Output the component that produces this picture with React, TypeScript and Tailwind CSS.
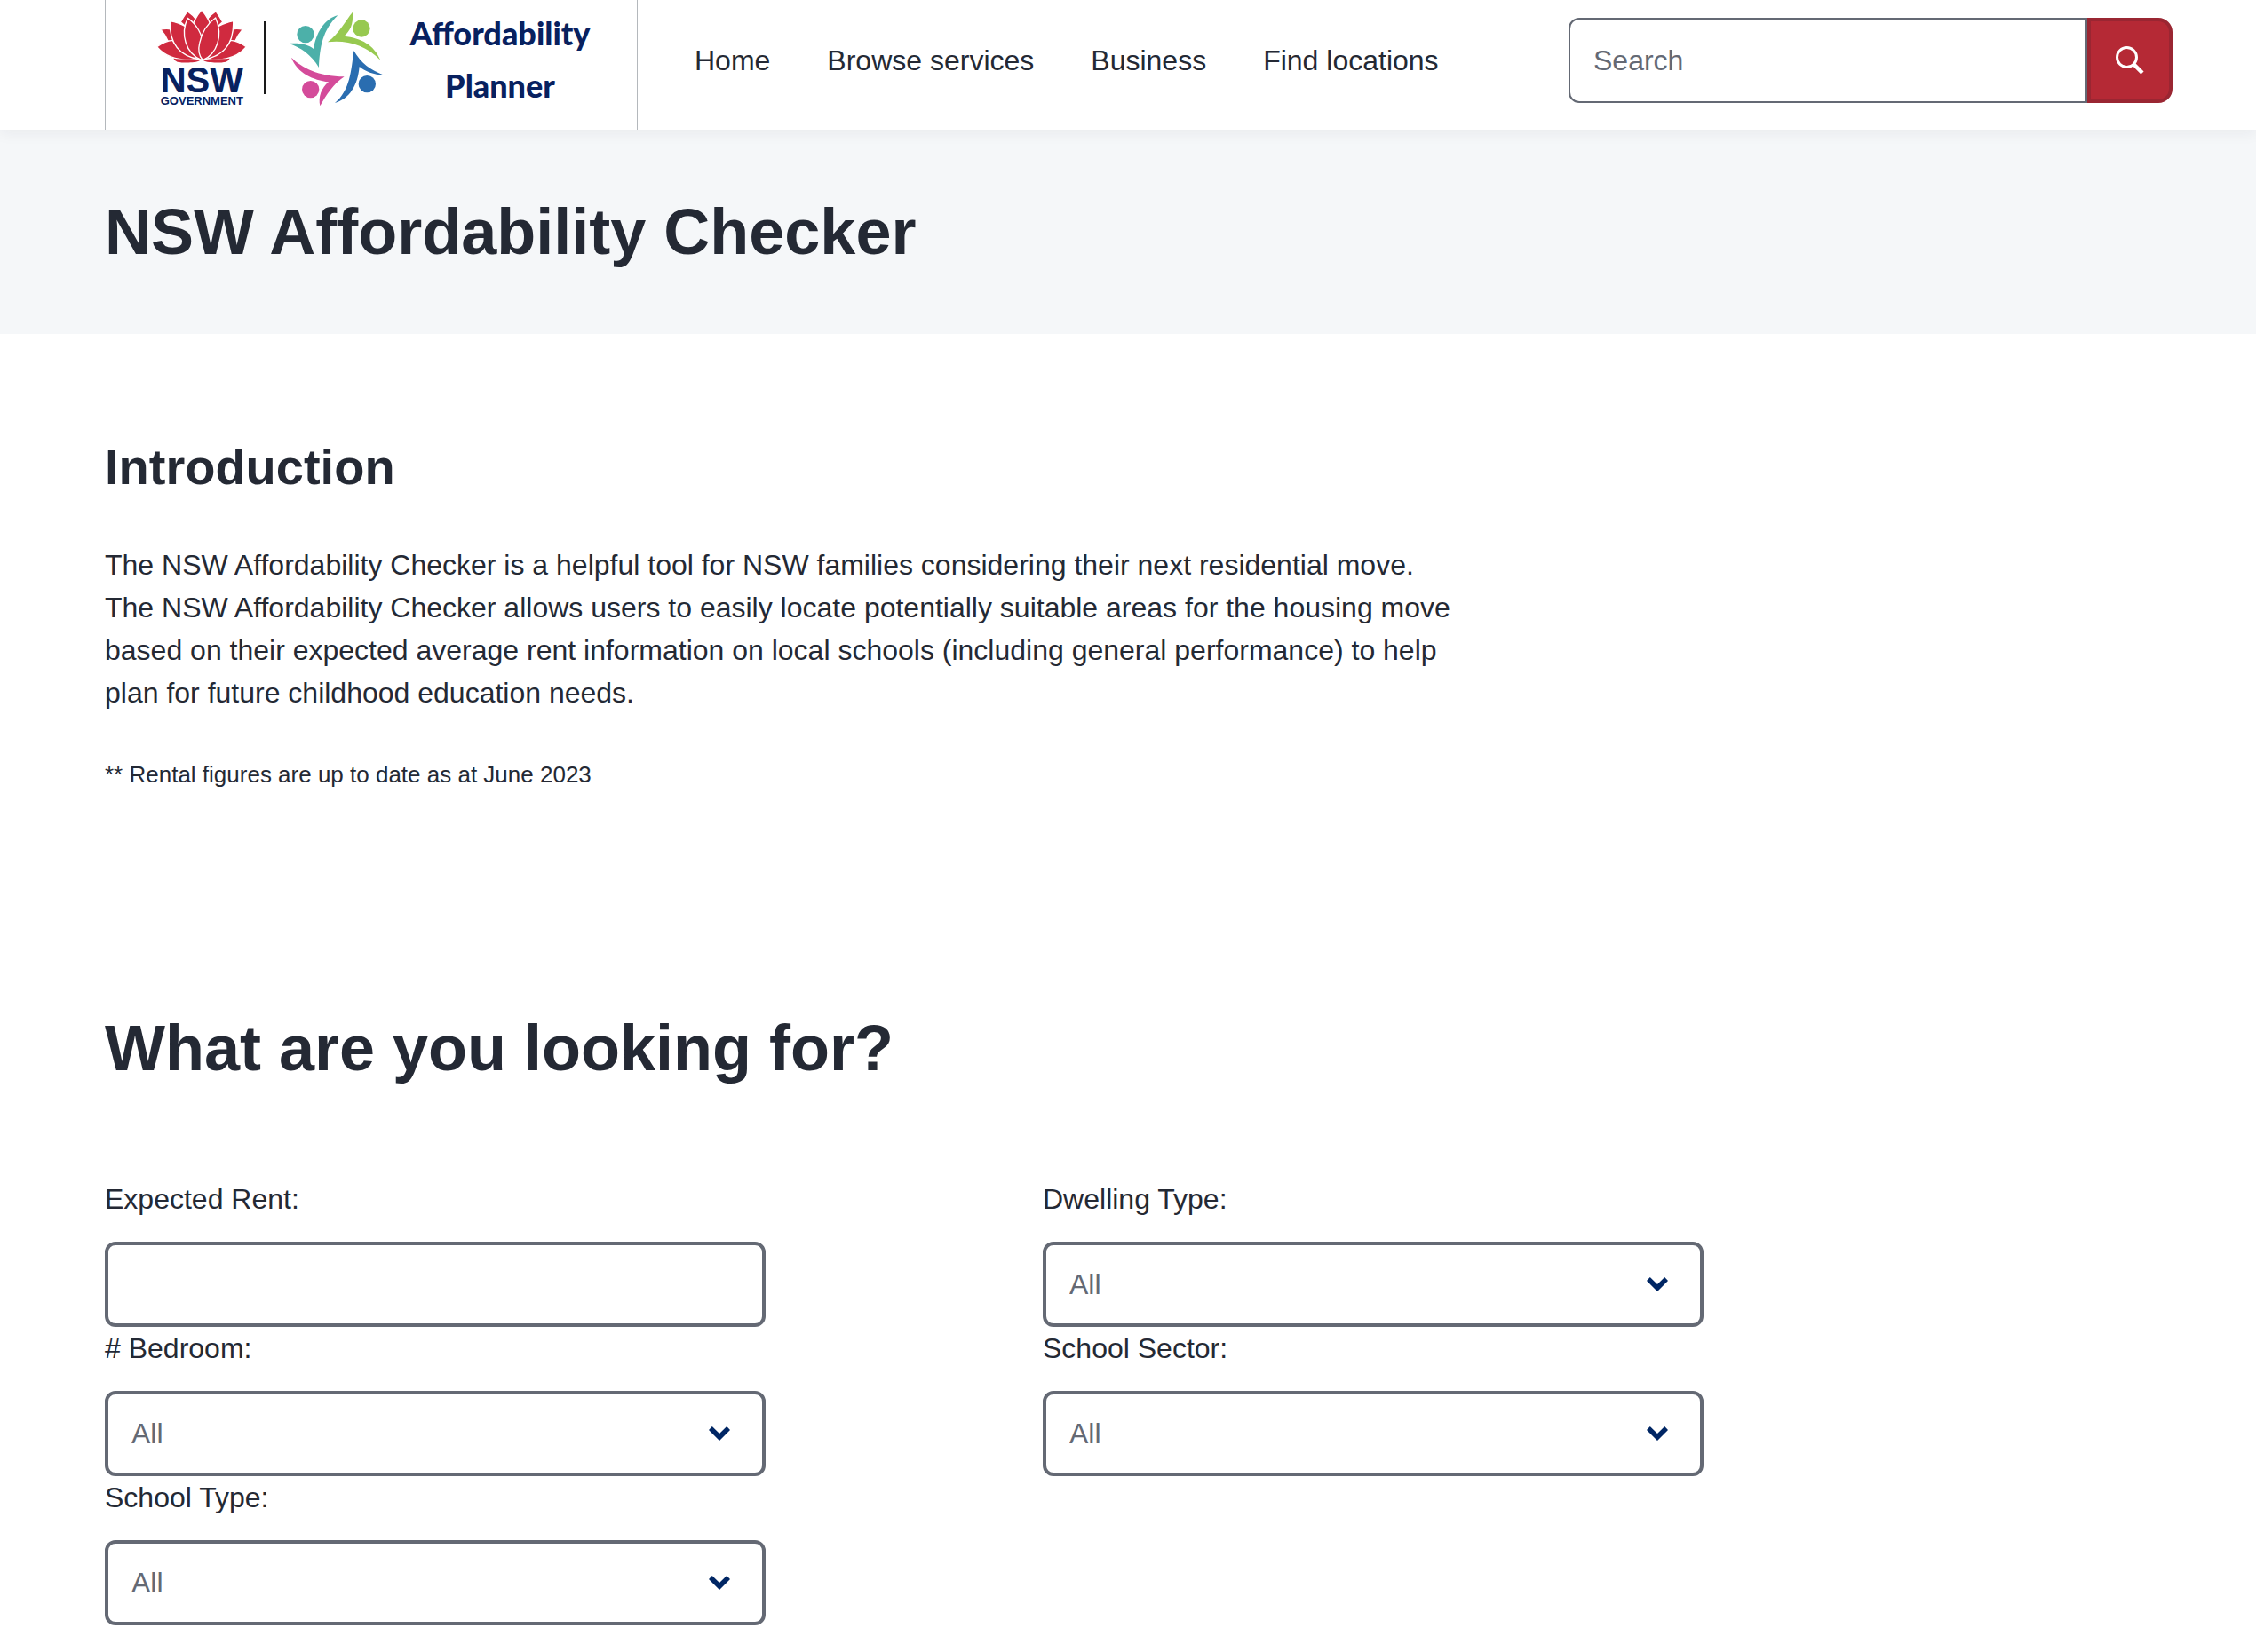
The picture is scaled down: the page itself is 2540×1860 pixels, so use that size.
import React from "react";

function LotusHalf() {
  return (
    <>
      <path d="M63 99 Q90 94 114 102 L130 142 L88 138 Q80 118 63 99Z" />
      <path d="M154 38 Q172 50 184 66 L172 110 L131 74 Q141 56 154 38Z" />
      <path d="M51 158 Q78 138 104 136 Q130 180 196 200 C140 207 86 199 51 158Z" />
      <path d="M95 71 Q124 76 152 92 C144 140 160 176 197 201 C130 190 92 150 95 71Z" />
    </>
  );
}

function NswMark() {
  return (
    <svg viewBox="49 30 306 330" className="h-[110px] w-[102px] shrink-0" role="img" aria-label="NSW Government">
      <g fill="#d02a3f" stroke="#ffffff" strokeWidth="4" strokeLinejoin="round">
        <LotusHalf />
        <g transform="translate(404 0) scale(-1 1)">
          <LotusHalf />
        </g>
        <path d="M202 33 C218 52 232 76 236 100 L202 170 L168 100 C172 76 186 52 202 33Z" />
        <path d="M155 61 C186 82 205 118 206 150 L202 203 C146 180 130 112 155 61Z" />
        <path d="M249 60 C276 120 254 182 206 203 C194 190 188 174 195 146 C202 112 218 82 249 60Z" />
      </g>
      <g fill="#d02a3f">
        <path d="M107 197 C134 202 164 196 196 205 C180 213 140 213 120 209 Q111 206 107 197Z" />
        <path d="M297 197 C270 202 240 196 208 205 C224 213 264 213 284 209 Q293 206 297 197Z" />
      </g>
      <g fill="#08215f" textAnchor="middle" className="font-['Liberation_Sans',Arial,sans-serif] font-bold">
        <text x="203" y="313" fontSize="120">NSW</text>
        <text x="203" y="354" fontSize="39">GOVERNMENT</text>
      </g>
    </svg>
  );
}

function PeopleMark() {
  return (
    <svg viewBox="72 30 330 330" className="h-[110px] w-[110px] shrink-0" aria-hidden="true">
      <g fill="#4cb0a9">
        <circle cx="132" cy="116" r="29" />
        <path d="M241 52 C205 60 170 98 159 165 C142 150 110 144 76 147 C114 160 152 184 177 228 C180 160 190 100 241 52Z" />
      </g>
      <g fill="#97c950">
        <circle cx="321" cy="96" r="29" />
        <path d="M291 41 C268 68 246 112 207 142 C270 134 336 152 385 203 C364 152 320 128 262 122 C282 104 294 84 291 41Z" />
      </g>
      <g fill="#2a6db0">
        <circle cx="340" cy="284" r="29" />
        <path d="M295 171 C286 240 282 306 231 348 C280 334 308 290 314 225 C334 242 362 252 397 254 C350 236 320 214 295 171Z" />
      </g>
      <g fill="#d44b9a">
        <circle cx="149" cy="302" r="29" />
        <path d="M84 194 C118 228 176 258 263 259 C226 282 202 322 181 358 C174 328 186 296 210 277 C158 270 104 248 84 194Z" />
      </g>
    </svg>
  );
}

function SearchIcon() {
  return (
    <svg viewBox="0 0 32 32" className="size-8" fill="none" stroke="#ffffff" aria-hidden="true">
      <circle cx="12.5" cy="12.5" r="11" strokeWidth="3" />
      <path d="M20.5 20.5 L30 30" strokeWidth="4.5" />
    </svg>
  );
}

const navItems = ["Home", "Browse services", "Business", "Find locations"];

function Header() {
  return (
    <header className="relative flex h-[146px] items-start bg-white pr-[94px] pl-[118px] shadow-[0_4px_16px_rgba(34,39,43,0.06)]">
      <a href="#" className="flex h-full w-[600px] shrink-0 items-start border-x border-[#b4b8bc] pt-[10px] pl-[57px]">
        <NswMark />
        <span className="mt-[14px] ml-[19px] h-[82px] w-[3px] shrink-0 bg-[#1a1a1a]" />
        <span className="ml-[24px] flex">
          <PeopleMark />
        </span>
        <span className="-mt-[2px] ml-[24px] w-[210px] text-center font-['Lato',sans-serif] text-[36px] leading-[59px] font-black text-[#08215f]">
          <span className="block">Affordability</span>
          <span className="block">Planner</span>
        </span>
      </a>
      <nav className="mt-11 ml-16 flex gap-16">
        {navItems.map((item) => (
          <a key={item} href="#" className="whitespace-nowrap">
            {item}
          </a>
        ))}
      </nav>
      <form className="mt-5 ml-auto flex h-24 w-[680px]" onSubmit={(e) => e.preventDefault()}>
        <input
          type="search"
          aria-label="Search"
          placeholder="Search"
          className="min-w-0 flex-1 rounded-l-xl border-2 border-[#646974] bg-white px-[26px] placeholder:text-[#646974] placeholder:opacity-100"
        />
        <button
          type="submit"
          aria-label="Submit search"
          className="flex w-24 items-center justify-center rounded-r-2xl border-4 border-[#9a2632] bg-[#b52935]"
        >
          <SearchIcon />
        </button>
      </form>
    </header>
  );
}

function SelectField({ id, label }: { id: string; label: string }) {
  return (
    <div className="max-w-[744px]">
      <label htmlFor={id} className="mb-6 block">
        {label}
      </label>
      <div className="relative">
        <select
          id={id}
          className="block h-24 w-full appearance-none rounded-xl border-4 border-[#646974] bg-white px-[26px] text-[#646974]"
        >
          <option>All</option>
        </select>
        <svg
          viewBox="0 0 24 16"
          className="pointer-events-none absolute top-10 right-10 h-4 w-6"
          fill="#002664"
          aria-hidden="true"
        >
          <path d="M0 4 L3.8 0 L12 8 L20.2 0 L24 4 L12 16Z" />
        </svg>
      </div>
    </div>
  );
}

export default function App() {
  return (
    <div className="min-h-screen bg-white font-['Liberation_Sans',Arial,sans-serif] text-[32px] leading-[48px] text-[#242934]">
      <Header />
      <div className="bg-[#f5f7f9] px-[118px] py-[70px]">
        <h1 className="text-[72px] leading-[90px] font-bold">NSW Affordability Checker</h1>
      </div>
      <main className="px-[118px] pt-[115px] pb-7">
        <section className="w-2/3">
          <h2 className="text-[56px] leading-[70px] font-bold">Introduction</h2>
          <p className="mt-[51px]">
            The NSW Affordability Checker is a helpful tool for NSW families considering their next residential move.
            The NSW Affordability Checker allows users to easily locate potentially suitable areas for the housing move
            based on their expected average rent information on local schools (including general performance) to help
            plan for future childhood education needs.
          </p>
          <p className="mt-12 text-[26px] leading-10">** Rental figures are up to date as at June 2023</p>
        </section>
        <section className="mt-[243px]">
          <h2 className="text-[72px] leading-[90px] font-bold">What are you looking for?</h2>
          <form className="mt-[101px] grid w-11/12 grid-cols-2">
            <div className="max-w-[744px]">
              <label htmlFor="rent" className="mb-6 block">
                Expected Rent:
              </label>
              <input
                id="rent"
                type="text"
                className="block h-24 w-full rounded-xl border-4 border-[#646974] bg-white px-[26px] text-[#646974]"
              />
            </div>
            <SelectField id="dwelling" label="Dwelling Type:" />
            <SelectField id="bedroom" label="# Bedroom:" />
            <SelectField id="sector" label="School Sector:" />
            <SelectField id="school-type" label="School Type:" />
          </form>
        </section>
      </main>
    </div>
  );
}
